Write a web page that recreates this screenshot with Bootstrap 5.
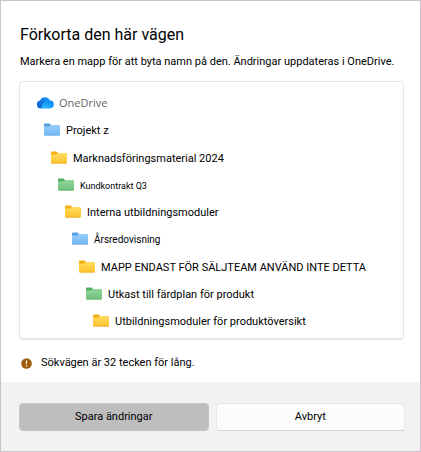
<!DOCTYPE html>
<html lang="sv">
<head>
<meta charset="utf-8">
<meta name="viewport" content="width=device-width, initial-scale=1">
<title>Förkorta den här vägen</title>
<link href="https://cdn.jsdelivr.net/npm/bootstrap@5.3.0/dist/css/bootstrap.min.css" rel="stylesheet">
<style>
body { font-family: Roboto, "Liberation Sans", sans-serif; font-size: 11px; line-height: 16px; color: #000; }
.dialog-frame { border: 1px solid #cdc2cd; }
.dialog-main { padding: 22px 16px 11px 18px; }
.dialog-title { font-size: 16px; line-height: 24px; margin-bottom: 7px; padding-left: 1px; }
.dialog-intro { margin-bottom: 11px; padding-left: 1px; }
.folder-tree { border: 1px solid #e6e6e6; border-bottom-width: 2px; border-radius: 4px; padding: 7px 16px 4px 17px; min-height: 259px; }
.tree-row { display: flex; align-items: center; gap: 6px; width: 100%; min-height: 27px; border: 0; padding: 0 0 0 calc(var(--depth) * 7px); background: transparent; color: inherit; text-align: left; }
.tree-row svg { flex: none; }
.tree-row span { padding-top: 3px; }
.tree-root { color: #666; font-family: "Open Sans", sans-serif; gap: 5px; }
.tree-root span { padding-top: 0; }
.font-compact { font-size: 9px; }
.font-snug { font-size: 10px; }
.notice { gap: 9px; padding: 15px 2px 0; }
.dialog-footer { background: #f2f2f2; padding: 21px 15px 20px 18px; gap: 7px; }
.dialog-footer .btn { --bs-btn-font-size: 11px; --bs-btn-line-height: 16px; --bs-btn-padding-y: 5px; --bs-btn-border-radius: 4px; --bs-btn-color: #000; flex: 1 1 0; }
.dialog-footer .btn-save { --bs-btn-bg: #bebebe; --bs-btn-border-color: #c6c6c6; --bs-btn-hover-bg: #b3b3b3; }
.dialog-footer .btn-cancel { --bs-btn-bg: #fcfcfc; --bs-btn-border-color: #e6e6e6; --bs-btn-hover-bg: #f6f6f6; border-bottom-color: #d4d4d4; }
</style>
</head>
<body>
<svg width="0" height="0" class="position-absolute" aria-hidden="true">
  <defs>
    <linearGradient id="gy" x2="0" y2="1"><stop stop-color="#ffdc62"/><stop offset="1" stop-color="#ffc12b"/></linearGradient>
    <linearGradient id="gb" x2="0" y2="1"><stop stop-color="#95cdfb"/><stop offset="1" stop-color="#75b9f5"/></linearGradient>
    <linearGradient id="gg" x2="0" y2="1"><stop stop-color="#93d69b"/><stop offset="1" stop-color="#70c07c"/></linearGradient>
    <linearGradient id="c1" x2="1" y2="0"><stop stop-color="#0b5fd8"/><stop offset="1" stop-color="#1ea0fb"/></linearGradient>
    <linearGradient id="c2" x1="0" y1="1" x2="1" y2="0"><stop stop-color="#2cc4fb"/><stop offset="1" stop-color="#0a7cf6"/></linearGradient>
  </defs>
  <symbol id="yellow" viewBox="0 0 16 13"><path d="M0 1.5Q0 .5 1 .5h4.5l1.5 1.5v3H0z" fill="#f5ad13"/><path d="M0 3.5h5L7 2h8q1 0 1 1v8.5q0 1-1 1H1q-1 0-1-1z" fill="url(#gy)"/><path d="M.5 12.2h15" stroke="#e5a21c" stroke-width=".6"/></symbol>
  <symbol id="blue" viewBox="0 0 16 13"><path d="M0 1.5Q0 .5 1 .5h4.5l1.5 1.5v3H0z" fill="#539de0"/><path d="M0 3.5h5L7 2h8q1 0 1 1v8.5q0 1-1 1H1q-1 0-1-1z" fill="url(#gb)"/><path d="M.5 12.2h15" stroke="#5fa3dc" stroke-width=".6"/></symbol>
  <symbol id="green" viewBox="0 0 16 13"><path d="M0 1.5Q0 .5 1 .5h4.5l1.5 1.5v3H0z" fill="#4fae61"/><path d="M0 3.5h5L7 2h8q1 0 1 1v8.5q0 1-1 1H1q-1 0-1-1z" fill="url(#gg)"/><path d="M.5 12.2h15" stroke="#5fae6c" stroke-width=".6"/></symbol>
</svg>

<div class="dialog-frame min-vh-100 d-flex flex-column bg-white" role="dialog" aria-labelledby="title">
  <main class="dialog-main flex-grow-1">
    <h1 class="dialog-title fw-normal" id="title">Förkorta den här vägen</h1>
    <p class="dialog-intro">Markera en mapp för att byta namn på den. Ändringar uppdateras i OneDrive.</p>
    <ul class="folder-tree list-unstyled mb-0 d-flex flex-column justify-content-between">
      <li class="tree-row tree-root" style="--depth:0">
        <svg width="17" height="12" viewBox="0 0 17 12" aria-hidden="true"><path d="M4.2 11.3A3.9 3.9 0 0 1 3 3.6 5.4 5.4 0 0 1 13 3.6L12 7 5 11.3z" fill="url(#c1)"/><path d="M4.2 11.4C4.4 7 7.5 3.2 13 3.6a3.9 3.9 0 0 1-.2 7.8H4.5z" fill="url(#c2)"/><path d="M2.6 10.8C2.6 7 5.5 3.4 9.4 2.8 6.4 5 5.4 8 5.2 11.4H4z" fill="#0a55d2" fill-opacity=".35"/></svg>
        <span>OneDrive</span>
      </li>
      <li><button type="button" class="tree-row" style="--depth:1"><svg width="16" height="13" aria-hidden="true"><use href="#blue"/></svg><span>Projekt z</span></button></li>
      <li><button type="button" class="tree-row" style="--depth:2"><svg width="16" height="13" aria-hidden="true"><use href="#yellow"/></svg><span>Marknadsföringsmaterial 2024</span></button></li>
      <li><button type="button" class="tree-row font-compact" style="--depth:3"><svg width="16" height="13" aria-hidden="true"><use href="#green"/></svg><span>Kundkontrakt Q3</span></button></li>
      <li><button type="button" class="tree-row" style="--depth:4"><svg width="16" height="13" aria-hidden="true"><use href="#yellow"/></svg><span>Interna utbildningsmoduler</span></button></li>
      <li><button type="button" class="tree-row font-snug" style="--depth:5"><svg width="16" height="13" aria-hidden="true"><use href="#blue"/></svg><span>Årsredovisning</span></button></li>
      <li><button type="button" class="tree-row" style="--depth:6"><svg width="16" height="13" aria-hidden="true"><use href="#yellow"/></svg><span>MAPP ENDAST FÖR SÄLJTEAM ANVÄND INTE DETTA</span></button></li>
      <li><button type="button" class="tree-row" style="--depth:7"><svg width="16" height="13" aria-hidden="true"><use href="#green"/></svg><span>Utkast till färdplan för produkt</span></button></li>
      <li><button type="button" class="tree-row" style="--depth:8"><svg width="16" height="13" aria-hidden="true"><use href="#yellow"/></svg><span>Utbildningsmoduler för produktöversikt</span></button></li>
    </ul>
    <div class="notice d-flex align-items-center" role="status">
      <svg width="11" height="11" viewBox="0 0 11 11" aria-hidden="true"><circle cx="5.5" cy="5.5" r="5.3" fill="#9d5d0d"/><path d="M5.5 2.8v3" stroke="#fff" stroke-width="1.1" stroke-linecap="round"/><circle cx="5.5" cy="8" r=".7" fill="#fff"/></svg>
      <span>Sökvägen är 32 tecken för lång.</span>
    </div>
  </main>
  <footer class="dialog-footer d-flex">
    <button type="button" class="btn btn-save">Spara ändringar</button>
    <button type="button" class="btn btn-cancel">Avbryt</button>
  </footer>
</div>
<script src="https://cdn.jsdelivr.net/npm/bootstrap@5.3.0/dist/js/bootstrap.bundle.min.js"></script>
</body>
</html>
